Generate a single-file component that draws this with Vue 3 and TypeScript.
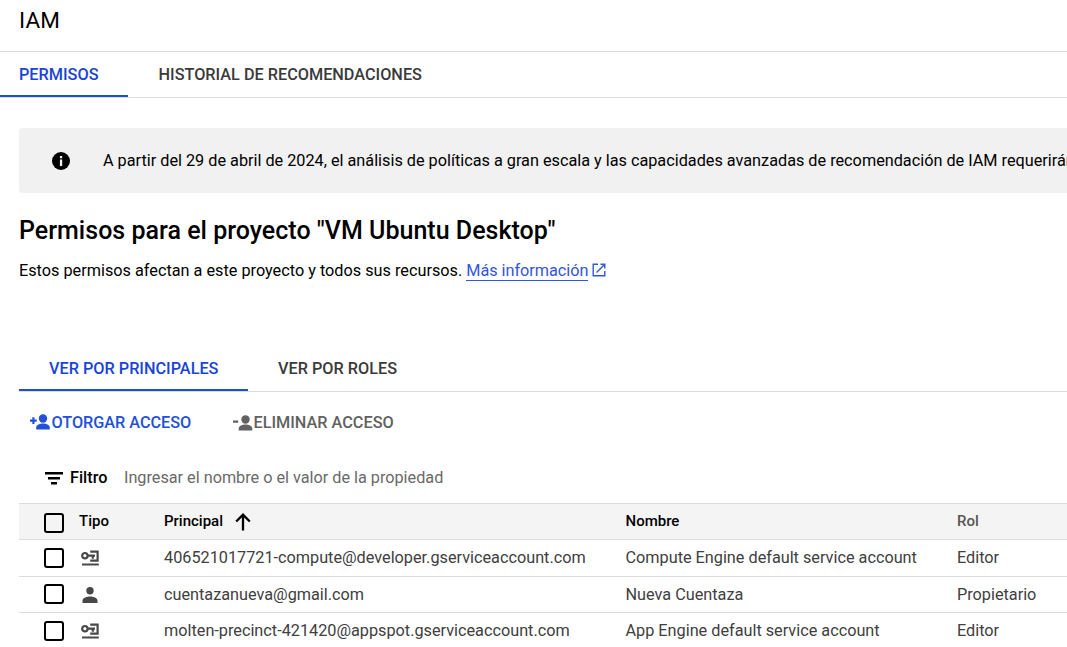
<script setup lang="ts">
interface Member {
  kind: 'service' | 'user'
  principal: string
  name: string
  role: string
}

const members: Member[] = [
  { kind: 'service', principal: '406521017721-compute@developer.gserviceaccount.com', name: 'Compute Engine default service account', role: 'Editor' },
  { kind: 'user', principal: 'cuentazanueva@gmail.com', name: 'Nueva Cuentaza', role: 'Propietario' },
  { kind: 'service', principal: 'molten-precinct-421420@appspot.gserviceaccount.com', name: 'App Engine default service account', role: 'Editor' },
]
</script>

<template>
  <main class="page">
    <header class="title"><h1>IAM</h1></header>
    <nav class="tabs">
      <a class="tab active">PERMISOS</a>
      <a class="tab history">HISTORIAL DE RECOMENDACIONES</a>
    </nav>

    <section class="content">
      <div class="notice">
        <svg class="info" viewBox="0 0 18 18"><circle cx="9" cy="9" r="9" /><path d="M7.9 4h2.3v2.3H7.900zM7.900 7.500h2.300V14H7.900z" fill="#f1f1f1" /></svg>
        <span>A partir del 29 de abril de 2024, el análisis de políticas a gran escala y las capacidades avanzadas de recomendación de IAM requerirán</span>
      </div>
      <h2>Permisos para el proyecto "VM Ubuntu Desktop"</h2>
      <p class="intro">
        <span>Estos permisos afectan a este proyecto y todos sus recursos.</span>
        <a class="link">Más información</a>
        <svg class="external" viewBox="0 0 14 14" fill="none" stroke="#3355dd" stroke-width="1.4"><path d="M6 1.200H1.200v11.600h11.600V8M8.500 1.200h4.300v4.300M12.600 1.400 4.500 9.500" /></svg>
      </p>

      <nav class="tabs inner">
        <a class="tab active">VER POR PRINCIPALES</a>
        <a class="tab">VER POR ROLES</a>
      </nav>

      <div class="actions">
        <button class="action grant">
          <svg viewBox="0 0 20 16"><circle cx="13" cy="4.500" r="4.200" /><path d="M6.200 15.400v-2c0-2.600 4-3.900 6.800-3.900s6.800 1.300 6.800 3.900v2zM0 5.500h2.300V3.200h2.200v2.300h2.300v2.200H4.500V10H2.300V7.700H0z" /></svg>
          <span>OTORGAR ACCESO</span>
        </button>
        <button class="action remove">
          <svg viewBox="0 0 20 16"><circle cx="12.500" cy="4.500" r="4.200" /><path d="M5.700 15.400v-2c0-2.600 4-3.900 6.800-3.900s6.800 1.300 6.800 3.900v2zM0 5.500h5.200v2.200H0z" /></svg>
          <span>ELIMINAR ACCESO</span>
        </button>
      </div>

      <div class="filter">
        <svg viewBox="0 0 18 13"><path d="M0 0h18v2.500H0zM3 5h12v2.500H3zM6 10h6v2.500H6z" /></svg>
        <strong>Filtro</strong>
        <span class="hint">Ingresar el nombre o el valor de la propiedad</span>
      </div>

      <div class="table">
        <div class="row head">
          <span class="box"></span>
          <span class="label">Tipo</span>
          <span class="sorted"><span class="label">Principal</span>
            <svg viewBox="0 0 16 18" fill="none" stroke="#000" stroke-width="2.300"><path d="M8 17.500V2M1.200 8.500 8 1.700l6.800 6.800" /></svg>
          </span>
          <span class="label">Nombre</span>
          <span class="role label">Rol</span>
        </div>
        <div v-for="m in members" :key="m.principal" class="row" :class="m.kind">
          <span class="box"></span>
          <svg v-if="m.kind === 'service'" class="kind" viewBox="0 0 18 16" fill="none" stroke="#484848" stroke-width="2.200"><circle cx="3.900" cy="5.700" r="2.700" /><path d="M6.500 5.700H14M11.800 5.700v3M9.200 1.600h7.400v9H9.200M1 14.500h16.800" /></svg>
          <svg v-else class="kind" viewBox="0 0 18 16" fill="#484848"><circle cx="9" cy="3.700" r="3.700" /><path d="M1.500 16v-2.500c0-2.600 4.500-4 7.500-4s7.500 1.400 7.500 4V16z" /></svg>
          <span>{{ m.principal }}</span>
          <span>{{ m.name }}</span>
          <span>{{ m.role }}</span>
        </div>
      </div>
    </section>
  </main>
</template>

<style scoped>
.page { height: 647px; overflow: hidden; background: #fff; color: #000; font: 400 16.25px/20px Roboto, sans-serif; white-space: nowrap; }
.title { height: 51px; border-bottom: 1px solid #dcdcdc; padding-left: 19px; }
h1 { margin: 0; font-size: 22.5px; font-weight: 400; line-height: 40px; letter-spacing: 0.1px; }
.tabs { display: flex; height: 45px; border-bottom: 1px solid #dcdcdc; font-weight: 500; color: #3a3a3a; }
.tab { box-sizing: border-box; height: 45px; line-height: 45px; padding: 0 30px; }
.tabs .active { height: 45px; color: #1a44d6; border-bottom: 2px solid #1a4fd8; }
.tabs:not(.inner) .active { width: 128px; padding-left: 19px; }
.history { padding-left: 30.5px; }
.content { padding-left: 19px; }
.notice { display: flex; align-items: center; height: 65px; margin-top: 30px; background: #f1f1f1; border-radius: 4px 0 0 4px; letter-spacing: -0.006px; }
.info { width: 18px; height: 18px; margin: 1px 33px 0 33px; flex: none; }
h2 { margin: 22px 0 0; height: 32px; font-size: 25px; line-height: 32px; font-weight: 500; letter-spacing: 0.015px; }
.intro { display: flex; margin: 14px 0 0; height: 20px; }
.link { color: #3355dd; margin-left: 4px; letter-spacing: -0.03px; border-bottom: 1px solid #3355dd; }
.external { width: 14px; height: 14px; margin: 2px 0 0 3.5px; }
.inner { margin-top: 65px; }
.inner .active { width: 229px; }
.actions { display: flex; height: 61px; align-items: center; }
.action { display: flex; align-items: center; padding: 0; border: 0; background: none; font: 500 16.25px/20px Roboto, sans-serif; }
.action svg { width: 20px; height: 16px; fill: currentColor; flex: none; }
.grant { color: #2250d8; margin-left: 11px; width: 203px; gap: 1.5px; letter-spacing: -0.03px; }
.grant svg { margin-bottom: 2px; }
.remove { color: #616161; gap: 0.5px; }
.filter { display: flex; align-items: center; height: 50px; }
.filter svg { width: 18px; height: 13px; margin: 1px 7px 0 26px; }
.filter strong { font-weight: 500; width: 54px; }
.hint { color: #6a6a6a; letter-spacing: -0.015px; }
.row { display: grid; grid-template-columns: 35px 85px 461.5px 331.5px 1fr; align-items: center; height: 36px; padding-left: 25px; border-bottom: 1px solid #dcdcdc; color: #404040; letter-spacing: -0.005px; }
.row.user { height: 35px; }
.user .box { margin-bottom: 1px; }
.head { height: 35px; border-top: 1px solid #dcdcdc; background: #f4f4f4; color: #000; font-weight: 500; font-size: 15px; }
.head .label { margin-bottom: 2px; }
.head .role { color: #555; }
.head .box { margin-top: 2px; }
.box { box-sizing: border-box; width: 20px; height: 20px; border: 2px solid #000; border-radius: 3px; }
.sorted { display: flex; align-items: center; }
.sorted svg { width: 16px; height: 18px; margin: 1px 0 0 12px; }
.kind { width: 18px; height: 16px; margin-left: 2px; }
</style>

<style>
body { margin: 0; }
</style>
